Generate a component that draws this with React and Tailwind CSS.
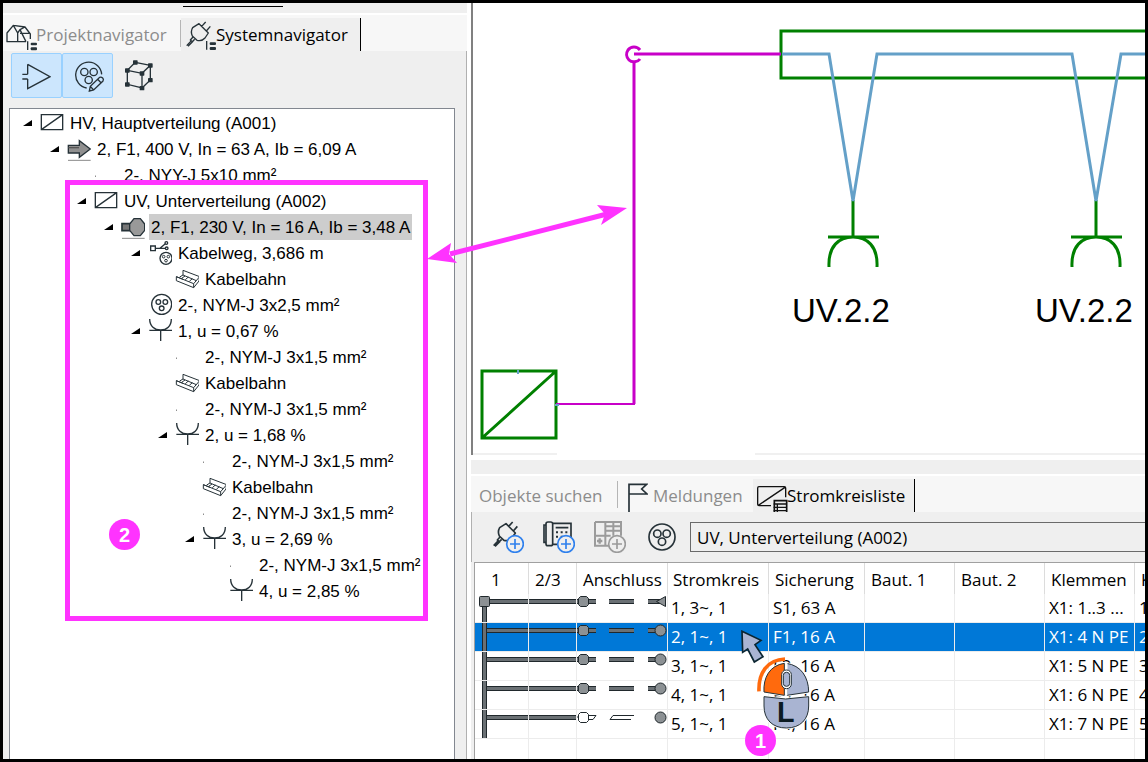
// src/App.jsx
import clsx from 'clsx';

// One entry per line of the system tree, from top to bottom
const treeRows = [
  { level: 0, icon: 'board', open: true, label: 'HV, Hauptverteilung (A001)' },
  { level: 1, icon: 'feed', open: true, label: '2, F1, 400 V, In = 63 A, Ib = 6,09 A' },
  { level: 2, icon: 'dot', label: '2-, NYY-J 5x10 mm²' },
  { level: 2, icon: 'board', open: true, label: 'UV, Unterverteilung (A002)' },
  { level: 3, icon: 'circuit', open: true, label: '2, F1, 230 V, In = 16 A, Ib = 3,48 A', selected: true },
  { level: 4, icon: 'route', open: true, label: 'Kabelweg, 3,686 m' },
  { level: 5, icon: 'tray', label: 'Kabelbahn' },
  { level: 4, icon: 'cable', label: '2-, NYM-J 3x2,5 mm²' },
  { level: 4, icon: 'socket', open: true, label: '1, u = 0,67 %' },
  { level: 5, icon: 'dot', label: '2-, NYM-J 3x1,5 mm²' },
  { level: 5, icon: 'tray', label: 'Kabelbahn' },
  { level: 5, icon: 'dot', label: '2-, NYM-J 3x1,5 mm²' },
  { level: 5, icon: 'socket', open: true, label: '2, u = 1,68 %' },
  { level: 6, icon: 'dot', label: '2-, NYM-J 3x1,5 mm²' },
  { level: 6, icon: 'tray', label: 'Kabelbahn' },
  { level: 6, icon: 'dot', label: '2-, NYM-J 3x1,5 mm²' },
  { level: 6, icon: 'socket', open: true, label: '3, u = 2,69 %' },
  { level: 7, icon: 'dot', label: '2-, NYM-J 3x1,5 mm²' },
  { level: 7, icon: 'socket', label: '4, u = 2,85 %' },
];

const circuits = [
  { circuit: '1, 3~, 1', fuse: 'S1, 63 A', clamps: 'X1: 1..3 ...', next: '1', end: 'triangle', first: true },
  { circuit: '2, 1~, 1', fuse: 'F1, 16 A', clamps: 'X1: 4 N PE', next: '2', end: 'circle', selected: true },
  { circuit: '3, 1~, 1', fuse: 'F2, 16 A', clamps: 'X1: 5 N PE', next: '3', end: 'circle' },
  { circuit: '4, 1~, 1', fuse: 'F3, 16 A', clamps: 'X1: 6 N PE', next: '4', end: 'circle' },
  { circuit: '5, 1~, 1', fuse: 'F4, 16 A', clamps: 'X1: 7 N PE', next: '5', end: 'circle', spare: true },
];

/* ---------- Icons ---------- */

function PlugShape() {
  return (
    <>
      <path d="M23 20L42 8L70 36L60 51Q50 62 36 58L22 45Q16 32 23 20ZM50 16L62 3M64 30L76 16" />
      <path d="M24 48L16 57L22 62L29 55M20 58L5 74M24 61L9 76" />
    </>
  );
}

function ListMark({ y }) {
  return (
    <g transform={`translate(0 ${y})`} fill="#263238" stroke="none">
      <path d="M63 0h4v26h-4z" />
      <rect x="74" y="4" width="19" height="8" rx="3" />
      <rect x="74" y="18" width="19" height="9" rx="3" />
    </g>
  );
}

function HouseIcon() {
  return (
    <svg className="h-7 w-[31px] shrink-0 self-end" viewBox="0 0 93 84" fill="none" stroke="#263238" strokeWidth="4" strokeLinejoin="round">
      <path d="M3 56V30L22 7L35 30V56ZM22 7L57 12L73 33V48M35 56H60M35 30L42 20L57 12M42 31H73M42 20L60 56" />
      <ListMark y={55} />
    </svg>
  );
}

function PlugIcon() {
  return (
    <svg className="h-[30px] w-[31px] shrink-0 self-end" viewBox="0 0 93 90" fill="none" stroke="#263238" strokeWidth="4" strokeLinejoin="round">
      <PlugShape />
      <ListMark y={60} />
    </svg>
  );
}

function AmpIcon() {
  return (
    <svg className="h-[27px] w-[29px]" viewBox="0 0 87 81" fill="none" stroke="#263238" strokeWidth="4">
      <path d="M17 4L84 41L17 77V48M17 4V34M1 34H17M1 48H17" />
    </svg>
  );
}

function CableEditIcon() {
  return (
    <svg className="h-[31px] w-[30px]" viewBox="0 0 90 93" fill="none" stroke="#263238" strokeWidth="4">
      <path d="M35 81A39 39 0 1 1 80 40" />
      <circle cx="28" cy="33" r="11" />
      <circle cx="56" cy="33" r="11" />
      <circle cx="41" cy="57" r="11" />
      <path d="M43 90L46 76L74 49Q79 47 83 51Q87 55 84 60L56 87ZM46 76L56 87M68 55L78 65" />
    </svg>
  );
}

const cubeNodes = [[31, 7], [76, 16], [7, 31], [51, 40], [7, 73], [51, 84], [76, 60]];

function CubeIcon() {
  return (
    <svg className="h-[31px] w-7" viewBox="0 0 84 93" fill="none" stroke="#263238" strokeWidth="4">
      <path d="M31 7L76 16L51 40L7 31ZM7 31V73L51 84V40M51 84L76 60V16" />
      {cubeNodes.map(([x, y]) => (
        <rect key={`${x}-${y}`} x={x - 7} y={y - 6} width="14" height="13" rx="2" fill="#263238" stroke="none" />
      ))}
    </svg>
  );
}

function FlagIcon() {
  return (
    <svg className="h-[29px] w-5 shrink-0 self-end" viewBox="0 0 60 87" fill="none" stroke="#263238" strokeWidth="5">
      <path d="M3 87V4H56L41 18L57 33H3" />
    </svg>
  );
}

function CircuitListIcon() {
  return (
    <svg className="h-[26px] w-[31px] shrink-0 self-end" viewBox="0 0 93 78" fill="none" stroke="#111" strokeWidth="4">
      <path d="M42 59H6Q2 59 2 55V6Q2 2 6 2H82Q86 2 86 6V34M4 58L84 4" />
      <path d="M52 78V44H89V78" fill="#eee" strokeWidth="5" />
      <path d="M50 54H90M50 64H90M50 74H90M61 54V78" />
    </svg>
  );
}

function PlusBadge({ color }) {
  return (
    <>
      <circle cx="69" cy="69" r="25" fill="#efefef" stroke={color} strokeWidth="5" />
      <path d="M69 54V84M54 69H84" stroke={color} strokeWidth="5" />
    </>
  );
}

function AddPlugIcon() {
  return (
    <svg className="size-8" viewBox="0 0 96 96" fill="none" stroke="#263238" strokeWidth="5" strokeLinejoin="round">
      <PlugShape />
      <PlusBadge color="#2f80ed" />
    </svg>
  );
}

function AddDeviceIcon() {
  return (
    <svg className="size-8" viewBox="0 0 96 96" fill="none" stroke="#263238" strokeWidth="5">
      <rect x="9" y="3" width="20" height="71" rx="6" />
      <path d="M9 12H3V64H9M29 7H84V50M29 70H48M38 20H76" />
      <path d="M39 34H76M39 47H62" strokeWidth="6" strokeDasharray="6 8" />
      <PlusBadge color="#2f80ed" />
    </svg>
  );
}

function AddCabinetIcon() {
  return (
    <svg className="size-8" viewBox="0 0 96 96" fill="none" stroke="#9b9b9b" strokeWidth="6">
      <path d="M3 3H81V44M3 3V74H46M34 3V74M3 44H50M34 16H81M34 29H81M58 3V44" />
      <path d="M9 60H25M17 52V68" strokeWidth="7" />
      <PlusBadge color="#9b9b9b" />
    </svg>
  );
}

function CableIcon() {
  return (
    <svg className="size-7" viewBox="0 0 84 84" fill="none" stroke="#263238" strokeWidth="5">
      <circle cx="42" cy="42" r="39" />
      <circle cx="28" cy="32" r="11" />
      <circle cx="56" cy="32" r="11" />
      <circle cx="42" cy="56" r="11" />
    </svg>
  );
}

function TreeIcon({ type }) {
  return (
    <svg className="size-6 shrink-0" viewBox="0 0 72 72" fill="none" stroke="#263238" strokeWidth="4">
      {type === 'dot' && <rect x="3" y="38" width="3" height="3" fill="#555" stroke="none" />}
      {type === 'board' && <path d="M4 11H68V56H4ZM4 56L68 11" />}
      {type === 'feed' && (
        <>
          <path d="M4 25H37V11L70 36L37 61V48H4Z" fill="#8f8f8f" />
          <path d="M4 32H36" stroke="#555" />
          <path d="M3 70H71" stroke="#8a8a8a" strokeWidth="3" />
        </>
      )}
      {type === 'circuit' && (
        <>
          <path d="M3 26H30V47H3Z" fill="#777" strokeWidth="5" />
          <path d="M39 11H58L71 27V46L58 62H39L26 46V27Z" fill="#999" />
          <path d="M3 70H71" stroke="#8a8a8a" strokeWidth="3" />
        </>
      )}
      {type === 'route' && (
        <>
          <path d="M8 15H22V29H8ZM22 22H52M36 22L52 8" />
          <circle cx="55" cy="6" r="4" />
          <circle cx="56" cy="22" r="4" />
          <circle cx="54" cy="52" r="18" />
          <g strokeWidth="3">
            <circle cx="47" cy="47" r="4" />
            <circle cx="61" cy="47" r="4" />
            <circle cx="54" cy="59" r="4" />
          </g>
        </>
      )}
      {type === 'tray' && (
        <path d="M24 10L74 29L72 42L56 62L4 41V29L24 37M4 29L56 50L74 29M56 50V62M24 10V24L64 41M14 30L24 24M31 38L40 30M43 43L52 35M20 34L30 27" strokeWidth="3" />
      )}
      {type === 'cable' && (
        <>
          <circle cx="41" cy="34" r="30" />
          <circle cx="31" cy="27" r="7" />
          <circle cx="52" cy="27" r="7" />
          <circle cx="41" cy="46" r="7" />
        </>
      )}
      {type === 'socket' && <path d="M5 0C5 22 20 33 38 33C56 33 70 22 70 0M4 34H72M38 33V66" />}
    </svg>
  );
}

/* ---------- Left side: navigator ---------- */

function TreeRow({ row }) {
  return (
    <li className="flex h-[26px] items-center" style={{ paddingLeft: row.level * 27 }}>
      <svg className="mr-2 h-[7px] w-[9px] shrink-0" viewBox="0 0 9 7">
        {row.open && <path d="M0 6L9 0V6Z" fill="#000" />}
      </svg>
      <TreeIcon type={row.icon} />
      <span className={clsx('ml-1 h-[26px] px-0.5 pt-0.5 leading-6 whitespace-nowrap', row.selected && 'bg-[#cdcdcd]')}>
        {row.label}
      </span>
    </li>
  );
}

function Navigator() {
  return (
    <aside className="flex w-[464px] shrink-0 flex-col bg-[#efefef]">
      <div className="h-[10px] pt-[3px] pl-[180px]">
        <div className="h-px w-[100px] bg-black" />
      </div>
      <div className="flex h-[38px] items-end border-t-2 border-white bg-[#f7f7f7] text-[17px]">
        <button className="flex h-[33px] w-[177px] items-center pl-[3px] text-[#8c8c8c]">
          <HouseIcon />
          <span className="-ml-px">Projektnavigator</span>
        </button>
        <div className="mb-1 h-[27px] w-px bg-[#b5b5b5]" />
        <button className="flex h-[33px] w-[180px] items-center border-r border-black bg-[#efefef] pl-1">
          <PlugIcon />
          <span>Systemnavigator</span>
        </button>
      </div>

      <div className="flex min-h-0 flex-1 flex-col border-r border-[#b0b0b0] pt-0.5">
        <div className="flex pl-2">
          <button aria-label="Stromkreise" className="flex h-[45px] w-[51px] items-center justify-center rounded-xs border border-[#99d1ff] bg-[#cce6fd] pt-0.5">
            <AmpIcon />
          </button>
          <button aria-label="Kabel bearbeiten" className="flex h-[45px] w-[51px] items-center justify-center rounded-xs border border-[#99d1ff] bg-[#cce6fd] pt-0.5 pl-1">
            <CableEditIcon />
          </button>
          <button aria-label="3D" className="flex h-[45px] w-[51px] items-center justify-center">
            <CubeIcon />
          </button>
        </div>
        <ul className="mt-[10px] mr-[11px] ml-1.5 min-h-0 flex-1 overflow-hidden border border-b-0 border-[#828790] bg-white pt-px pl-[13px] font-['Liberation_Sans',sans-serif] text-[17px]">
          {treeRows.map((row, i) => (
            <TreeRow key={i} row={row} />
          ))}
        </ul>
      </div>
    </aside>
  );
}

/* ---------- Right side: plan ---------- */

function SocketSymbol({ x, label }) {
  return (
    <g transform={`translate(${x} 0)`}>
      <path
        d="M0 200V237M-25 237H26M-24 267C-25 246 -14 237 0 237C14 237 25 246 24 267"
        fill="none"
        stroke="#008000"
        strokeWidth="3"
      />
      <text x="-61" y="322" fontSize="33" fill="#000" fontFamily="Liberation Sans, Arial, sans-serif">{label}</text>
    </g>
  );
}

function PlanView() {
  return (
    <div className="min-h-0 flex-1 border-l-2 border-[#808080] bg-white">
      <svg className="h-full w-full">
        <g transform="translate(-473 -3)" fill="none" strokeWidth="3">
          <path d="M1160 31H781V78H1160" stroke="#008000" />
          <path d="M482 371H556V438H482ZM482 438L556 371" stroke="#008000" />
          <SocketSymbol x={853} label="UV.2.2" />
          <SocketSymbol x={1096} label="UV.2.2" />
          <path d="M782 54H829L853 201L877 54H1072L1096 201L1121 54H1160" stroke="#64a0c8" />
          <path d="M781 54H634M634 61V404" stroke="#c800c8" />
          <path d="M635 404H556" stroke="#c800c8" strokeWidth="2" />
          <path d="M640 50C637 46 631 46 628 50C626 53 626 57 629 60C632 63 638 62 640 59" stroke="#c800c8" />
          <path d="M518 370V374M555 405H559" stroke="#64a0c8" strokeWidth="2" />
          <path d="M471 454H557M755 454H1160" stroke="#e1e1e1" strokeWidth="1" />
        </g>
      </svg>
    </div>
  );
}

/* ---------- Right side: circuit list ---------- */

function Bar({ x, width }) {
  return (
    <>
      <rect x={x} y="5" width={width} height="5" fill="#20282c" />
      <rect x={x} y="6" width={width} height="3" fill="#6a7074" />
    </>
  );
}

function BusCell({ first }) {
  return (
    <svg className="block h-7 w-full">
      <rect x="7" y={first ? 8 : 0} width="5" height="30" fill="#20282c" />
      <rect x="8" y={first ? 8 : 0} width="3" height="30" fill="#6a7074" />
      <Bar x={12} width={60} />
      {first && <rect x="4.5" y="2.5" width="10" height="10" rx="1" fill="#8c9194" stroke="#20282c" />}
    </svg>
  );
}

function ConnectionCell({ end, spare }) {
  return (
    <svg className="block h-7 w-full">
      {!spare && <Bar x={0} width={19} />}
      {spare && <path d="M0 7H2M12 5.5H19L16 9.5H12" fill="#fff" stroke="#20282c" />}
      <path d="M1.5 4.5L3.5 2.5H9.5L11.5 4.5V10.5L9.5 12.5H3.5L1.5 10.5Z" fill={spare ? '#fff' : '#8c9194'} stroke="#20282c" />
      {spare ? (
        <path d="M36 5.5H57M33 9.5H54M36 5.5L33 9.5" stroke="#20282c" />
      ) : (
        <>
          <Bar x={32} width={25} />
          <Bar x={71} width={12} />
        </>
      )}
      {end === 'triangle' ? (
        <path d="M79.5 7.5L88.5 2.5V12.5Z" fill="#8c9194" stroke="#20282c" />
      ) : (
        <circle cx="83.5" cy="7.5" r="5.5" fill="#8c9194" stroke="#20282c" />
      )}
    </svg>
  );
}

function CircuitTable() {
  return (
    <div className="ml-[3px] overflow-hidden border-t border-l border-[#a0a0a0] bg-white">
      <table className="w-[720px] table-fixed border-separate border-spacing-0 text-[17px] whitespace-nowrap">
        <colgroup>
          <col className="w-[54px]" />
          <col className="w-12" />
          <col className="w-[91px]" />
          <col className="w-[101px]" />
          <col className="w-24" />
          <col className="w-[90px]" />
          <col className="w-[90px]" />
          <col className="w-[90px]" />
          <col />
        </colgroup>
        <thead>
          <tr className="h-[31px] text-left [&>th]:border-r [&>th]:border-[#dcdcdc] [&>th]:pt-0.5 [&>th]:pr-0 [&>th]:pb-0 [&>th]:font-normal">
            <th className="pl-4">1</th>
            <th className="pl-1.5">2/3</th>
            <th className="pl-1.5">Anschluss</th>
            <th className="pl-[5px]">Stromkreis</th>
            <th className="pl-1.5">Sicherung</th>
            <th className="pl-1.5">Baut. 1</th>
            <th className="pl-1.5">Baut. 2</th>
            <th className="pl-1.5">Klemmen</th>
            <th className="pl-1.5">Kabel</th>
          </tr>
        </thead>
        <tbody>
          {circuits.map((c) => (
            <tr
              key={c.circuit}
              className={clsx(
                'h-[29px] [&>td]:border-r [&>td]:border-b [&>td]:border-[#ececec] [&>td]:py-0 [&>td]:leading-7',
                c.selected && 'bg-[#0078d7] text-white'
              )}
            >
              <td className="p-0"><BusCell first={c.first} /></td>
              <td className="p-0">
                <svg className="block h-7 w-full"><Bar x={0} width={60} /></svg>
              </td>
              <td className="p-0"><ConnectionCell end={c.end} spare={c.spare} /></td>
              <td className="px-[3px]">{c.circuit}</td>
              <td className="px-1">{c.fuse}</td>
              <td />
              <td />
              <td className="px-1">{c.clamps}</td>
              <td className="px-1">{c.next}</td>
            </tr>
          ))}
          <tr className="h-5 [&>td]:border-r [&>td]:border-[#ececec]">
            {Array.from({ length: 9 }, (_, i) => <td key={i} />)}
          </tr>
        </tbody>
      </table>
    </div>
  );
}

function CircuitPanel() {
  return (
    <section className="mt-[5px] shrink-0 bg-[#efefef]">
      <div className="h-[14px]" />
      <div className="flex h-[38px] items-end border-t-2 border-white bg-[#f7f7f7] text-[17px] text-[#8c8c8c]">
        <button className="h-[33px] w-[146px] pl-2 text-left">Objekte suchen</button>
        <div className="mb-1 h-[27px] w-px bg-[#b5b5b5]" />
        <button className="flex h-[33px] w-[135px] items-center pl-[10px]">
          <FlagIcon />
          <span className="ml-[5px]">Meldungen</span>
        </button>
        <button className="flex h-[33px] w-[162px] items-center border-r border-black bg-[#efefef] pl-1 text-black">
          <CircuitListIcon />
          <span className="-ml-px">Stromkreisliste</span>
        </button>
      </div>

      <div className="flex h-[50px] items-center border-l border-[#b0b0b0] pl-5">
        <button aria-label="Verbraucher hinzufügen" className="mr-[19px]"><AddPlugIcon /></button>
        <button aria-label="Gerät hinzufügen" className="mr-[19px]"><AddDeviceIcon /></button>
        <button aria-label="Verteiler hinzufügen" disabled className="mr-[22px]"><AddCabinetIcon /></button>
        <button aria-label="Kabel" className="mr-[14px]"><CableIcon /></button>
        <input
          aria-label="Verteilung"
          defaultValue="UV, Unterverteilung (A002)"
          className="h-[30px] min-w-0 flex-1 border border-r-0 border-[#6a6a6a] bg-[#efefef] px-1.5 text-[17px] outline-none"
        />
      </div>
      <CircuitTable />
    </section>
  );
}

/* ---------- Annotations over the windows ---------- */

function StepBadge({ children, className }) {
  return (
    <div className={clsx('absolute flex size-[31px] items-center justify-center rounded-full bg-[#ff33ff] font-[\'Liberation_Sans\',sans-serif] text-xl font-bold text-white', className)}>
      {children}
    </div>
  );
}

function Annotations() {
  return (
    <div className="pointer-events-none absolute inset-0">
      <div className="absolute top-[177px] left-[62px] h-[441px] w-[363px] border-[5px] border-[#ff33ff]" />
      <svg className="absolute top-[197px] left-[422px] h-[70px] w-[206px]" viewBox="425 200 206 70">
        <path d="M450 254L607 214" stroke="#ff33ff" strokeWidth="5" />
        <path d="M427 259L451 243L449 254L457 263ZM627 208L597 205L605 214L601 225Z" fill="#ff33ff" />
      </svg>
      <StepBadge className="top-[516px] left-[106px]">2</StepBadge>
      <StepBadge className="top-[722px] left-[742px]">1</StepBadge>

      {/* pointer and left mouse button */}
      <svg className="absolute top-[627px] left-[738px] h-[34px] w-6" viewBox="0 0 72 102" fill="#a9b4d2" stroke="#0b2530" strokeWidth="5">
        <path d="M3 4L60 31L42 44L66 80L40 96L20 57L5 67Z" />
      </svg>
      <svg className="absolute top-[653px] left-[754px] h-[75px] w-[54px]" viewBox="0 0 162 225">
        <path d="M6 106C4 50 30 12 84 9" fill="none" stroke="#ff6a0d" strokeWidth="11" />
        <g stroke="#fff" strokeWidth="8">
          <path d="M21 108C18 66 38 28 82 22V118Z" />
          <path d="M88 22C132 28 155 64 155 108L90 118Z" />
          <path d="M21 122L86 129L155 122V150C155 190 130 216 88 216C46 216 21 190 21 150Z" />
        </g>
        <g stroke="#263238" strokeWidth="3">
          <path d="M21 108C18 66 38 28 82 22V118Z" fill="#ff6a0d" />
          <path d="M88 22C132 28 155 64 155 108L90 118Z" fill="#a9b4d2" />
          <path d="M21 122L86 129L155 122V150C155 190 130 216 88 216C46 216 21 190 21 150Z" fill="#a9b4d2" />
          <path d="M88 18V118" stroke="#fff" strokeWidth="7" />
          <rect x="74" y="42" width="29" height="56" rx="14" fill="#fff" />
          <rect x="79" y="49" width="19" height="42" rx="9" fill="#a9b4d2" />
        </g>
        <text x="60" y="198" fontSize="86" fontWeight="bold" fill="#0b1a22" fontFamily="Liberation Sans, Arial, sans-serif">L</text>
      </svg>
    </div>
  );
}

function App() {
  return (
    <main className="relative flex h-screen overflow-hidden border-[3px] border-black bg-white font-['Open_Sans',sans-serif] text-black">
      <Navigator />
      <div className="ml-1 flex min-w-0 flex-1 flex-col">
        <PlanView />
        <CircuitPanel />
      </div>
      <Annotations />
    </main>
  );
}

export default App;
